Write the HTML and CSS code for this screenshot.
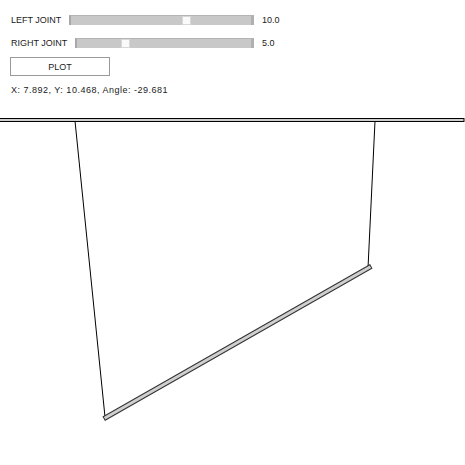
FILE: index.html
```html
<!DOCTYPE html>
<html lang="en">
<head>
  <meta charset="UTF-8" />
  <title>Hanging Platform</title>
  <link rel="stylesheet" href="styles.css">
</head>
<body>

<div class="controls">
  <div class="row">
    <div class="slider-box">
      <span class="label">LEFT JOINT</span>
      <div class="track"><div class="handle" style="left: 111px;"></div></div>
    </div>
    <span class="value">10.0</span>
  </div>
  <div class="row">
    <div class="slider-box">
      <span class="label">RIGHT JOINT</span>
      <div class="track"><div class="handle" style="left: 44px;"></div></div>
    </div>
    <span class="value">5.0</span>
  </div>
  <button class="plot-btn">PLOT</button>
  <div class="readout">X: 7.892, Y: 10.468, Angle: -29.681</div>
</div>

<svg class="canvas" width="465" height="365" viewBox="0 100 465 365">
  <rect x="-1" y="118.5" width="465" height="3" fill="#cfcfcf" stroke="#000" stroke-width="1"/>
  <line x1="75" y1="121" x2="105" y2="417" stroke="#000" stroke-width="1"/>
  <line x1="375" y1="121" x2="368" y2="268" stroke="#000" stroke-width="1"/>
  <g transform="translate(105 418) rotate(-29.68)">
    <rect x="-1" y="-2" width="307" height="4" fill="#cfcfcf" stroke="#333" stroke-width="1"/>
  </g>
</svg>

</body>
</html>
```

FILE: styles.css
```css
* {
  margin: 0;
  padding: 0;
  box-sizing: border-box;
}
body {
  width: 465px;
  height: 465px;
  overflow: hidden;
  background: #fff;
  font-family: 'Liberation Sans', Arial, sans-serif;
  font-size: 9px;
  color: #222;
}
.controls {
  padding: 15px 0 0 11px;
  height: 100px;
}
.row {
  display: flex;
  align-items: center;
  height: 10px;
  margin-bottom: 13px;
}
.slider-box {
  display: flex;
  align-items: center;
  width: 243px;
}
.label {
  margin-right: 8px;
  white-space: nowrap;
}
.track {
  position: relative;
  flex: 1;
  height: 10px;
  background: #c8c8c8;
  border-top: 1px solid #b4b4b4;
  border-left: 2px solid #a8a8a8;
  border-right: 3px solid #b0b0b0;
}
.handle {
  position: absolute;
  top: 0;
  width: 9px;
  height: 9px;
  background: #fafafa;
  border: 1px solid #d8d8d8;
}
.value {
  margin-left: 8px;
}
.plot-btn {
  display: block;
  width: 100px;
  height: 19px;
  margin: -4px 0 0 -1px;
  background: #fff;
  border: 1px solid #999;
  font-family: inherit;
  font-size: 9px;
  color: #222;
}
.readout {
  margin-top: 9px;
  letter-spacing: 0.5px;
}
.canvas {
  display: block;
}
```
